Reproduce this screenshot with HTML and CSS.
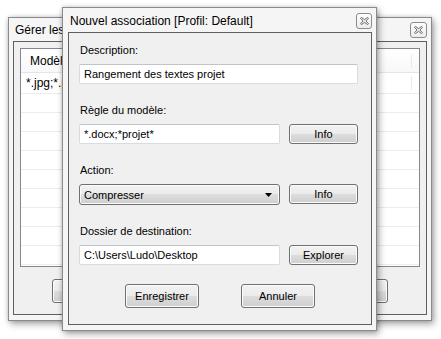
FILE: index.html
```html
<!DOCTYPE html>
<html lang="fr">
<head>
    <meta charset="UTF-8">
    <meta name="viewport" content="width=device-width, initial-scale=1.0">
    <title>Nouvel association</title>
    <link rel="stylesheet" href="styles.css">
</head>
<body>
    <div class="desktop">
        <!-- Fenêtre en arrière-plan -->
        <div class="window window-back">
            <div class="titlebar">
                <span class="title">Gérer les associations</span>
                <span class="close-btn">
                    <svg width="9" height="8" viewBox="0 0 9 8"><polygon points="0.5,1.3 1.5,0.5 4.5,2.6 7.5,0.5 8.5,1.3 5.9,4 8.5,6.7 7.5,7.5 4.5,5.4 1.5,7.5 0.5,6.7 3.1,4" fill="#f4f4f4" stroke="#5a5a5a" stroke-width="0.9"/></svg>
                </span>
            </div>
            <div class="client back-client">
                <div class="listview">
                    <div class="lv-header"><span class="lv-cell">Modèle</span><span class="lv-end"></span></div>
                    <div class="lv-row lv-first"><span class="lv-cell">*.jpg;*.png</span><span class="lv-end"></span></div>
                    <div class="lv-row"><span class="lv-cell"></span><span class="lv-end"></span></div>
                    <div class="lv-row"><span class="lv-cell"></span><span class="lv-end"></span></div>
                    <div class="lv-row"><span class="lv-cell"></span><span class="lv-end"></span></div>
                    <div class="lv-row"><span class="lv-cell"></span><span class="lv-end"></span></div>
                    <div class="lv-row"><span class="lv-cell"></span><span class="lv-end"></span></div>
                    <div class="lv-row"><span class="lv-cell"></span><span class="lv-end"></span></div>
                    <div class="lv-row"><span class="lv-cell"></span><span class="lv-end"></span></div>
                    <div class="lv-row"><span class="lv-cell"></span><span class="lv-end"></span></div>
                    <div class="lv-row"><span class="lv-cell"></span><span class="lv-end"></span></div>
                </div>
                <div class="back-buttons">
                    <button type="button" class="btn btn-dialog">Ajouter</button>
                    <button type="button" class="btn btn-dialog">Fermer</button>
                </div>
            </div>
        </div>

        <!-- Boîte de dialogue active -->
        <div class="window window-front">
            <div class="titlebar">
                <span class="title">Nouvel association [Profil: Default]</span>
                <span class="close-btn">
                    <svg width="9" height="8" viewBox="0 0 9 8"><polygon points="0.5,1.3 1.5,0.5 4.5,2.6 7.5,0.5 8.5,1.3 5.9,4 8.5,6.7 7.5,7.5 4.5,5.4 1.5,7.5 0.5,6.7 3.1,4" fill="#f4f4f4" stroke="#5a5a5a" stroke-width="0.9"/></svg>
                </span>
            </div>
            <form class="client form-client">
                <div class="field">
                    <label class="field-label" for="description">Description:</label>
                    <input type="text" id="description" class="textbox textbox-wide" value="Rangement des textes projet">
                </div>

                <div class="field">
                    <label class="field-label" for="pattern">Règle du modèle:</label>
                    <div class="field-row">
                        <input type="text" id="pattern" class="textbox" value="*.docx;*projet*">
                        <button type="button" class="btn btn-side">Info</button>
                    </div>
                </div>

                <div class="field">
                    <label class="field-label">Action:</label>
                    <div class="field-row">
                        <div class="combo">
                            <span>Compresser</span>
                            <svg width="7" height="4" viewBox="0 0 7 4"><polygon points="0,0 7,0 3.5,4" fill="#000"/></svg>
                        </div>
                        <button type="button" class="btn btn-side">Info</button>
                    </div>
                </div>

                <div class="field">
                    <label class="field-label" for="destination">Dossier de destination:</label>
                    <div class="field-row">
                        <input type="text" id="destination" class="textbox" value="C:\Users\Ludo\Desktop">
                        <button type="button" class="btn btn-side">Explorer</button>
                    </div>
                </div>

                <div class="dialog-buttons">
                    <button type="submit" class="btn btn-dialog">Enregistrer</button>
                    <button type="button" class="btn btn-dialog">Annuler</button>
                </div>
            </form>
        </div>
    </div>
</body>
</html>
```

FILE: styles.css
```css
body {
    margin: 0;
    padding: 0;
    background: #ffffff;
    font-family: "Liberation Sans", Arial, sans-serif;
    font-size: 11px;
    color: #000;
}

.desktop {
    position: relative;
    width: 441px;
    height: 339px;
    overflow: hidden;
}

/* Fenêtres */

.window {
    position: absolute;
    box-sizing: border-box;
    display: flex;
    flex-direction: column;
    background: #f5f5f5;
    border: 1px solid #8a8a8a;
    box-shadow: 2px 3px 7px rgba(0, 0, 0, 0.35), 0 0 4px rgba(0, 0, 0, 0.15);
}

.window-back {
    left: 8px;
    top: 17px;
    width: 424px;
    height: 304px;
    padding: 0 4px 5px 4px;
}

.window-front {
    left: 62px;
    top: 7px;
    width: 315px;
    height: 324px;
    padding: 0 4px 5px 5px;
}

.titlebar {
    display: flex;
    align-items: center;
    justify-content: space-between;
    height: 24px;
    padding-left: 2px;
    padding-top: 1px;
    box-sizing: border-box;
}

.window-back .titlebar {
    height: 23px;
}

.title {
    font-size: 12px;
    color: #000;
}

.close-btn {
    display: flex;
    align-items: center;
    justify-content: center;
    width: 14px;
    height: 14px;
    border: 1px solid #8c8c8c;
    border-radius: 3px;
    background: linear-gradient(#fdfdfd, #ececec);
}

.window-back .close-btn {
    width: 15px;
}

.client {
    flex: 1;
    border: 1px solid #5f5f5f;
    background: #f0f0f0;
}

/* Liste de la fenêtre arrière */

.back-client {
    padding: 6px 0 0 6px;
}

.listview {
    box-sizing: border-box;
    width: 400px;
    height: 219px;
    border: 1px solid #828790;
    background: #fff;
    overflow: hidden;
}

.lv-header, .lv-row {
    display: flex;
    box-sizing: border-box;
    border-bottom: 1px solid #ececec;
}

.lv-header {
    height: 24px;
    align-items: center;
    background: linear-gradient(#ffffff, #f7f8f9);
    border-bottom-color: #e3e5e8;
    font-size: 12px;
}

.lv-header .lv-cell {
    padding-left: 9px;
}

.lv-row {
    height: 19px;
    align-items: center;
    font-size: 12px;
}

.lv-first {
    height: 21px;
}

.lv-cell {
    width: 391px;
    padding-left: 5px;
    box-sizing: border-box;
    border-right: 1px solid #eaeaea;
    white-space: nowrap;
}

.lv-end {
    flex: 1;
}

.back-buttons {
    display: flex;
    justify-content: center;
    gap: 188px;
    margin-top: 12px;
    padding-right: 6px;
}

/* Formulaire */

.form-client {
    padding: 10px 0 0 10px;
    margin: 0;
}

.field {
    margin-bottom: 19px;
}

.field-label {
    display: block;
    line-height: 14px;
    margin-bottom: 7px;
    padding-left: 1px;
}

.field-row {
    display: flex;
    gap: 9px;
}

.textbox {
    box-sizing: border-box;
    width: 201px;
    height: 20px;
    margin: 0;
    padding: 0 4px;
    font-family: inherit;
    font-size: 11px;
    color: #000;
    background: #fff;
    border: 1px solid #d8dbdf;
    border-top-color: #c0c3c8;
    border-radius: 2px;
    outline: none;
}

.textbox-wide {
    width: 279px;
}

.combo {
    box-sizing: border-box;
    width: 201px;
    height: 21px;
    display: flex;
    align-items: center;
    justify-content: space-between;
    padding: 0 7px 0 4px;
    border: 1px solid #707070;
    border-radius: 3px;
    background: linear-gradient(#f2f2f2 0%, #ebebeb 50%, #dddddd 50%, #cfcfcf 100%);
    box-shadow: inset 0 0 0 1px #fbfbfb;
}

/* Boutons */

.btn {
    box-sizing: border-box;
    margin: 0;
    padding: 0;
    font-family: inherit;
    font-size: 11px;
    color: #000;
    border: 1px solid #707070;
    border-radius: 3px;
    background: linear-gradient(#f2f2f2 0%, #ebebeb 50%, #dddddd 50%, #cfcfcf 100%);
    box-shadow: inset 0 0 0 1px #fbfbfb;
    cursor: pointer;
}

.btn-side {
    width: 69px;
    height: 20px;
}

.btn-dialog {
    width: 74px;
    height: 24px;
}

.dialog-buttons {
    display: flex;
    justify-content: center;
    gap: 42px;
    margin-top: 1px;
    padding-right: 10px;
}
```
